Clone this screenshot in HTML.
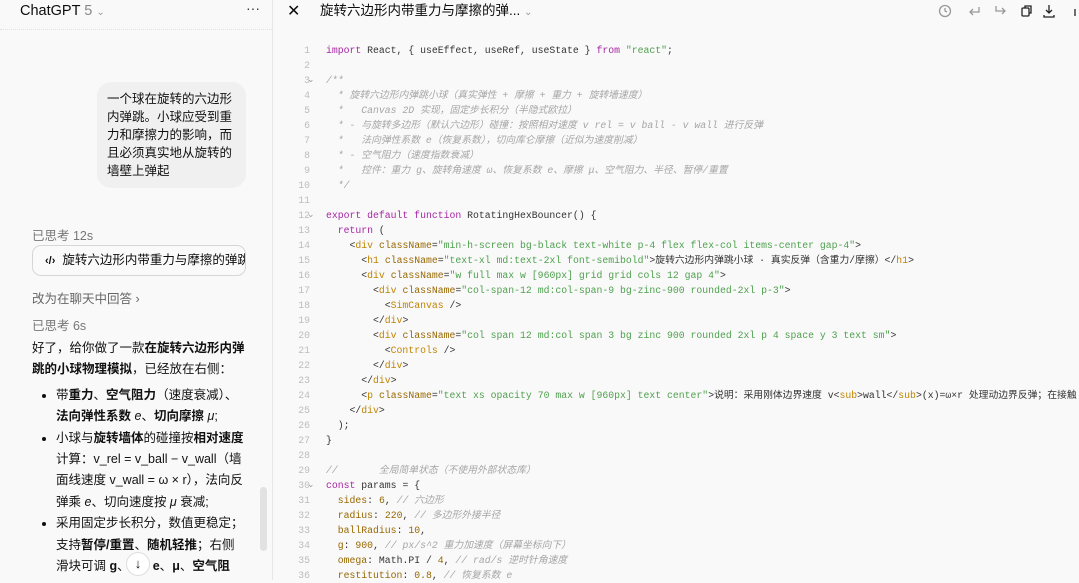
<!DOCTYPE html>
<html><head><meta charset="utf-8"><style>
*{margin:0;padding:0;box-sizing:border-box}
body{width:1079px;height:580px;overflow:hidden;background:#f9f9f9;font-family:"Liberation Sans","Noto Sans CJK SC",sans-serif;color:#0d0d0d;position:relative}
.left{position:absolute;left:0;top:0;width:273px;height:580px;background:#f9f9f9;border-right:1px solid #e6e6e6;overflow:hidden}
.a{position:absolute;white-space:nowrap}
.bubble{position:absolute;left:97px;top:82px;width:149px;height:106px;background:#f0f0f0;border-radius:14px;padding:8px 10px 0 10px;font-size:12.5px;line-height:18px;color:#111}
.btn{position:absolute;left:32px;top:245px;width:214px;height:31px;border:1px solid #d6d6d6;border-radius:9px;font-size:12.5px;line-height:29px;padding-left:12px;white-space:nowrap;overflow:hidden;background:#fafafa}
.p{position:absolute;left:32px;top:338px;width:213px;font-size:12.5px;line-height:21.4px;color:#111}
.p ul{margin:4px 0 0 0;padding-left:24px}
.p li{margin:0}
.code{position:absolute;left:280px;top:0;font-family:"Liberation Mono","Noto Sans CJK SC",monospace;font-size:9.8px;color:#333}
.ln,.cl,.fold{height:15px;line-height:15px;overflow:visible}
.ln{position:absolute;width:30px;text-align:right;color:#bdbdbd;left:0}
.cl{position:absolute;left:46px;white-space:pre}
.k{color:#a626a4}.s{color:#50a14f}.t{color:#c18401}.c{color:#a6a6a6;font-style:italic}.n{color:#986801}
.fold{position:absolute;left:27px;color:#999;font-size:9px}
</style></head><body>
<div class="left">
 <div class="a" style="left:20px;top:2px;font-size:14.5px;line-height:18px">ChatGPT <span style="color:#888">5</span> <span style="color:#999;font-size:10px">⌄</span></div>
 <div class="a" style="left:246px;top:0px;font-size:14px;color:#333">···</div>
 <div class="a" style="left:0;top:29px;width:272px;border-top:1px dotted #e0e0e0"></div>
 <div class="bubble">一个球在旋转的六边形内弹跳。小球应受到重力和摩擦力的影响，而且必须真实地从旋转的墙壁上弹起</div>
 <div class="a" style="left:32px;top:225px;font-size:12.5px;color:#777">已思考 12s</div>
 <div class="btn"><span style="font-size:11px;font-weight:bold">‹/›</span>&nbsp; 旋转六边形内带重力与摩擦的弹跳</div>
 <div class="a" style="left:32px;top:288px;font-size:12.5px;color:#666">改为在聊天中回答 ›</div>
 <div class="a" style="left:32px;top:315px;font-size:12.5px;color:#777">已思考 6s</div>
 <div class="p">好了，给你做了一款<b>在旋转六边形内弹跳的小球物理模拟</b>，已经放在右侧：
 <ul>
 <li>带<b>重力</b>、<b>空气阻力</b>（速度衰减）、<b>法向弹性系数</b> <i>e</i>、<b>切向摩擦</b> <i>μ</i>;</li>
 <li>小球与<b>旋转墙体</b>的碰撞按<b>相对速度</b>计算：v_rel = v_ball − v_wall（墙面线速度 v_wall = ω × r），法向反弹乘 <i>e</i>、切向速度按 <i>μ</i> 衰减;</li>
 <li>采用固定步长积分，数值更稳定；支持<b>暂停/重置</b>、<b>随机轻推</b>；右侧滑块可调 <b>g</b>、<b>ω</b>、<b>e</b>、<b>μ</b>、<b>空气阻力</b>、</li>
 </ul></div>
 <div class="a" style="left:260px;top:487px;width:7px;height:64px;background:#e2e2e2;border-radius:4px"></div>
 <div class="a" style="left:126px;top:552px;width:24px;height:24px;border-radius:12px;background:#fff;border:1px solid #ddd;text-align:center;font-size:13px;line-height:22px">↓</div>
</div>
<div class="a" style="left:287px;top:1px;font-size:16px">✕</div>
<div class="a" style="left:320px;top:2px;font-size:13.5px;line-height:18px">旋转六边形内带重力与摩擦的弹... <span style="color:#999;font-size:10px">⌄</span></div>
<svg class="a" style="left:935px;top:3px" width="144" height="16" fill="none" stroke="#999" stroke-width="1.3">
 <circle cx="10" cy="8" r="5.5"/><path d="M10 5v3l2 1"/>
 <path d="M44 4v5h-9M38 6l-3 3 3 3"/>
 <path d="M61 3v5h9M67 5l3 3-3 3" />
 <g stroke="#222"><rect x="87" y="5" width="7" height="8" rx="1"/><path d="M90 5V3h6v7h-2"/>
 <path d="M114 2v8M111 7l3 3 3-3M109 12v2h10v-2"/></g>
 <path d="M140 6v7" stroke="#222"/>
</svg>
<div class="code">
<div class="ln" style="top:43px">1</div><div class="cl" style="top:43px"><span class="k">import</span> React, { useEffect, useRef, useState } <span class="k">from</span> <span class="s">"react"</span>;</div>
<div class="ln" style="top:58px">2</div>
<div class="ln" style="top:73px">3</div><span class="fold" style="top:73px">⌄</span><div class="cl c" style="top:73px">/**</div>
<div class="ln" style="top:88px">4</div><div class="cl c" style="top:88px">  * 旋转六边形内弹跳小球（真实弹性 + 摩擦 + 重力 + 旋转墙速度）</div>
<div class="ln" style="top:103px">5</div><div class="cl c" style="top:103px">  *   Canvas 2D 实现，固定步长积分（半隐式欧拉）</div>
<div class="ln" style="top:118px">6</div><div class="cl c" style="top:118px">  * - 与旋转多边形（默认六边形）碰撞：按照相对速度 v rel = v ball - v wall 进行反弹</div>
<div class="ln" style="top:133px">7</div><div class="cl c" style="top:133px">  *   法向弹性系数 e（恢复系数），切向库仑摩擦（近似为速度削减）</div>
<div class="ln" style="top:148px">8</div><div class="cl c" style="top:148px">  * - 空气阻力（速度指数衰减）</div>
<div class="ln" style="top:163px">9</div><div class="cl c" style="top:163px">  *   控件：重力 g、旋转角速度 ω、恢复系数 e、摩擦 μ、空气阻力、半径、暂停/重置</div>
<div class="ln" style="top:178px">10</div><div class="cl c" style="top:178px">  */</div>
<div class="ln" style="top:193px">11</div>
<div class="ln" style="top:208px">12</div><span class="fold" style="top:208px">⌄</span><div class="cl" style="top:208px"><span class="k">export default function</span> RotatingHexBouncer() {</div>
<div class="ln" style="top:223px">13</div><div class="cl" style="top:223px">  <span class="k">return</span> (</div>
<div class="ln" style="top:238px">14</div><div class="cl" style="top:238px">    &lt;<span class="t">div</span> <span class="n">className</span>=<span class="s">"min-h-screen bg-black text-white p-4 flex flex-col items-center gap-4"</span>&gt;</div>
<div class="ln" style="top:253px">15</div><div class="cl" style="top:253px">      &lt;<span class="t">h1</span> <span class="n">className</span>=<span class="s">"text-xl md:text-2xl font-semibold"</span>&gt;旋转六边形内弹跳小球 · 真实反弹（含重力/摩擦）&lt;/<span class="t">h1</span>&gt;</div>
<div class="ln" style="top:268px">16</div><div class="cl" style="top:268px">      &lt;<span class="t">div</span> <span class="n">className</span>=<span class="s">"w full max w [960px] grid grid cols 12 gap 4"</span>&gt;</div>
<div class="ln" style="top:283px">17</div><div class="cl" style="top:283px">        &lt;<span class="t">div</span> <span class="n">className</span>=<span class="s">"col-span-12 md:col-span-9 bg-zinc-900 rounded-2xl p-3"</span>&gt;</div>
<div class="ln" style="top:298px">18</div><div class="cl" style="top:298px">          &lt;<span class="t">SimCanvas</span> /&gt;</div>
<div class="ln" style="top:313px">19</div><div class="cl" style="top:313px">        &lt;/<span class="t">div</span>&gt;</div>
<div class="ln" style="top:328px">20</div><div class="cl" style="top:328px">        &lt;<span class="t">div</span> <span class="n">className</span>=<span class="s">"col span 12 md:col span 3 bg zinc 900 rounded 2xl p 4 space y 3 text sm"</span>&gt;</div>
<div class="ln" style="top:343px">21</div><div class="cl" style="top:343px">          &lt;<span class="t">Controls</span> /&gt;</div>
<div class="ln" style="top:358px">22</div><div class="cl" style="top:358px">        &lt;/<span class="t">div</span>&gt;</div>
<div class="ln" style="top:373px">23</div><div class="cl" style="top:373px">      &lt;/<span class="t">div</span>&gt;</div>
<div class="ln" style="top:388px">24</div><div class="cl" style="top:388px">      &lt;<span class="t">p</span> <span class="n">className</span>=<span class="s">"text xs opacity 70 max w [960px] text center"</span>&gt;说明：采用刚体边界速度 v&lt;<span class="t">sub</span>&gt;wall&lt;/<span class="t">sub</span>&gt;(x)=ω×r 处理动边界反弹；在接触</div>
<div class="ln" style="top:403px">25</div><div class="cl" style="top:403px">    &lt;/<span class="t">div</span>&gt;</div>
<div class="ln" style="top:418px">26</div><div class="cl" style="top:418px">  );</div>
<div class="ln" style="top:433px">27</div><div class="cl" style="top:433px">}</div>
<div class="ln" style="top:448px">28</div>
<div class="ln" style="top:463px">29</div><div class="cl c" style="top:463px">//       全局简单状态（不使用外部状态库）</div>
<div class="ln" style="top:478px">30</div><span class="fold" style="top:478px">⌄</span><div class="cl" style="top:478px"><span class="k">const</span> params = {</div>
<div class="ln" style="top:493px">31</div><div class="cl" style="top:493px">  <span class="n">sides</span>: <span class="n">6</span>, <span class="c">// 六边形</span></div>
<div class="ln" style="top:508px">32</div><div class="cl" style="top:508px">  <span class="n">radius</span>: <span class="n">220</span>, <span class="c">// 多边形外接半径</span></div>
<div class="ln" style="top:523px">33</div><div class="cl" style="top:523px">  <span class="n">ballRadius</span>: <span class="n">10</span>,</div>
<div class="ln" style="top:538px">34</div><div class="cl" style="top:538px">  <span class="n">g</span>: <span class="n">900</span>, <span class="c">// px/s^2 重力加速度（屏幕坐标向下）</span></div>
<div class="ln" style="top:553px">35</div><div class="cl" style="top:553px">  <span class="n">omega</span>: Math.PI / <span class="n">4</span>, <span class="c">// rad/s 逆时针角速度</span></div>
<div class="ln" style="top:568px">36</div><div class="cl" style="top:568px">  <span class="n">restitution</span>: <span class="n">0.8</span>, <span class="c">// 恢复系数 e</span></div>
</div>
</body></html>
